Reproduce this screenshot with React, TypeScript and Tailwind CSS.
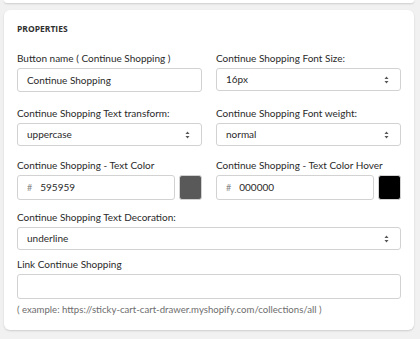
import React from 'react';

const Chevrons: React.FC = () => (
  <svg width="7" height="10" viewBox="0 0 7 10" className="shrink-0">
    <path d="M3.5 1.5 L5.5 4 H1.5 Z" fill="#555" />
    <path d="M3.5 8.5 L5.5 6 H1.5 Z" fill="#555" />
  </svg>
);

const Label: React.FC<{ children: React.ReactNode }> = ({ children }) => (
  <div className="text-[10px] leading-[14px] text-[#2a2a2a] mb-[3px] whitespace-nowrap">{children}</div>
);

const TextInput: React.FC<{ value?: string }> = ({ value }) => (
  <div className="h-[24px] border border-[#d2d2d2] rounded-[3px] bg-white flex items-center px-[9px] text-[10px] text-[#2a2a2a]">
    {value}
  </div>
);

const SelectBox: React.FC<{ value: string }> = ({ value }) => (
  <div className="h-[23px] border border-[#d2d2d2] rounded-[3px] bg-white flex items-center justify-between pl-[9px] pr-[10px] text-[10px] text-[#2a2a2a]">
    <span>{value}</span>
    <Chevrons />
  </div>
);

const ColorInput: React.FC<{ hex: string; swatch: string }> = ({ hex, swatch }) => (
  <div className="flex items-center gap-[4px]">
    <div className="flex-1 h-[25px] border border-[#d2d2d2] rounded-[3px] bg-white flex items-center px-[9px] text-[10px] text-[#2a2a2a]">
      <span className="text-[#8a8a8a] mr-[8px] text-[9px]">#</span>
      {hex}
    </div>
    <div className="w-[23px] h-[25px] rounded-[3px] border border-[#d2d2d2]" style={{ background: swatch }} />
  </div>
);

const App: React.FC = () => {
  return (
    <div className="w-[420px] h-[339px] bg-[#f1f1f1] overflow-hidden" style={{ fontFamily: 'Lato, "Open Sans", sans-serif' }}>
      <div className="mx-[4px] w-[410px] h-[3px] bg-white rounded-b-[6px] shadow-[0_1px_2px_rgba(0,0,0,0.15)]" />
      <div className="mx-[4px] mt-[7px] w-[410px] h-[320px] bg-white rounded-[6px] shadow-[0_1px_2px_rgba(0,0,0,0.15)] px-[13px] pt-[13px]">
        <div className="text-[8.5px] font-bold text-[#303030] leading-[12px]" style={{ fontFamily: '"Open Sans", sans-serif' }}>PROPERTIES</div>
        <div className="grid grid-cols-2 gap-x-[14px] mt-[16px]">
          <div>
            <Label>Button name ( Continue Shopping )</Label>
            <TextInput value="Continue Shopping" />
          </div>
          <div>
            <Label>Continue Shopping Font Size:</Label>
            <SelectBox value="16px" />
          </div>
          <div className="mt-[14px]">
            <Label>Continue Shopping Text transform:</Label>
            <SelectBox value="uppercase" />
          </div>
          <div className="mt-[14px]">
            <Label>Continue Shopping Font weight:</Label>
            <SelectBox value="normal" />
          </div>
          <div className="mt-[12px]">
            <Label>Continue Shopping - Text Color</Label>
            <ColorInput hex="595959" swatch="#595959" />
          </div>
          <div className="mt-[12px]">
            <Label>Continue Shopping - Text Color Hover</Label>
            <ColorInput hex="000000" swatch="#000000" />
          </div>
        </div>
        <div className="mt-[10px]">
          <Label>Continue Shopping Text Decoration:</Label>
          <SelectBox value="underline" />
        </div>
        <div className="mt-[7px]">
          <Label>Link Continue Shopping</Label>
          <div className="h-[25px] border border-[#d2d2d2] rounded-[3px] bg-white" />
        </div>
        <div className="mt-[4px] text-[9.6px] text-[#6d6d6d] leading-[14px] whitespace-nowrap">
          ( example: https://sticky-cart-cart-drawer.myshopify.com/collections/all )
        </div>
      </div>
    </div>
  );
};

export default App;
